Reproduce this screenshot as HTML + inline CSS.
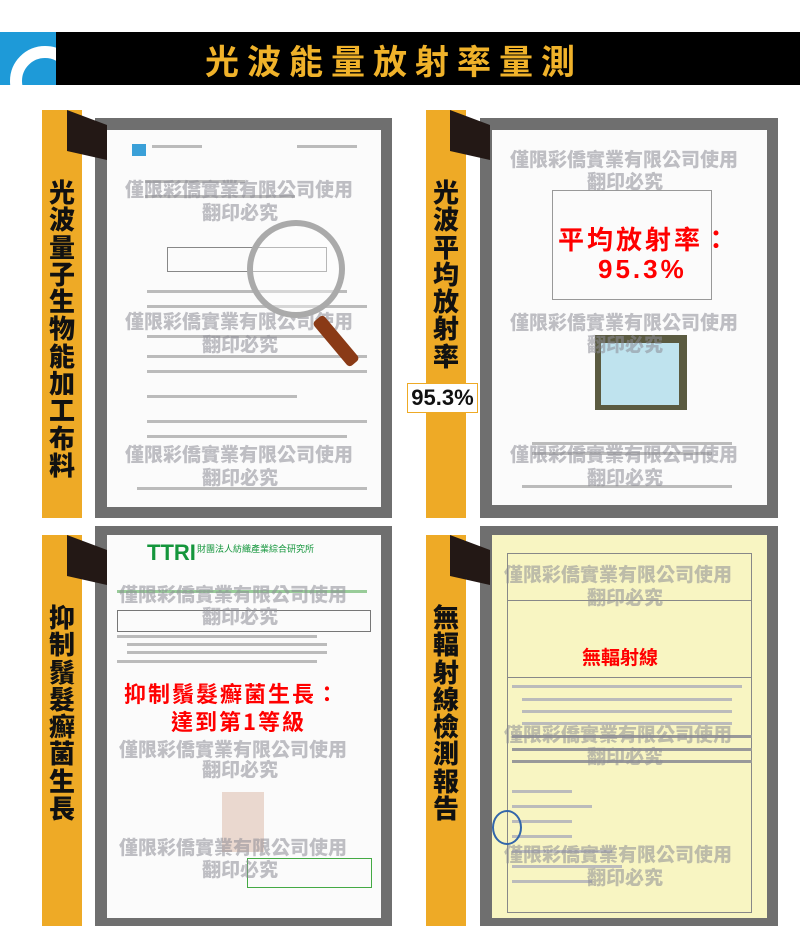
<!DOCTYPE html>
<html><head><meta charset="utf-8"><style>
*{margin:0;padding:0;box-sizing:border-box}
body{width:800px;height:945px;background:#fff;position:relative;overflow:hidden;font-family:"Liberation Sans","Noto Sans CJK TC",sans-serif}
.a{position:absolute}
.hdr{left:0;top:32px;width:800px;height:53px;background:#000}
.blue{left:0;top:32px;width:56px;height:53px;background:#1e9ad8;overflow:hidden}
.ttl{left:205px;top:37px;color:#f0b22a;font-size:34px;font-weight:bold;letter-spacing:8px;line-height:45px;font-family:"Noto Sans CJK TC",sans-serif}
.ys{background:#eeaa26}
.dk{background:#231815;clip-path:polygon(0 0,100% 30%,100% 100%,0 82%)}
.gray{background:#6f6f6f}
.doc{background:#fbfbfb;overflow:hidden}
.vt{color:#111;font-weight:900;font-size:26px;line-height:27.3px;width:40px;text-align:center;font-family:"Noto Sans CJK TC",sans-serif}
.wm{position:absolute;color:rgba(140,140,150,.55);font-weight:900;font-size:19px;white-space:nowrap;font-family:"Noto Sans CJK TC",sans-serif}
.wm2{position:absolute;color:rgba(140,140,150,.55);font-weight:900;font-size:19px;white-space:nowrap;font-family:"Noto Sans CJK TC",sans-serif}
.ln{position:absolute;height:3px;background:#bbb}
.red{position:absolute;color:#f00;font-weight:bold;white-space:nowrap;font-family:"Noto Sans CJK TC",sans-serif}
</style></head><body>
<div class="a hdr"></div>
<div class="a blue"><div style="position:absolute;left:10px;top:14px;width:70px;height:70px;border:12px solid #fff;border-radius:50%"></div></div>
<div class="a ttl">光波能量放射率量測</div>

<!-- panel 1 -->
<div class="a ys" style="left:42px;top:110px;width:40px;height:408px"></div>
<div class="a gray" style="left:95px;top:118px;width:297px;height:400px"></div>
<div class="a dk" style="left:67px;top:110px;width:40px;height:50px"></div>
<div class="a doc" style="left:107px;top:130px;width:274px;height:377px">
 <div class="a" style="left:25px;top:14px;width:14px;height:12px;background:#3aa0d8"></div>
 <div class="ln" style="left:45px;top:15px;width:50px"></div><div class="ln" style="left:190px;top:15px;width:60px"></div>
 <div class="ln" style="left:38px;top:50px;width:100px"></div><div class="ln" style="left:38px;top:65px;width:150px"></div>
 <div class="a" style="left:60px;top:117px;width:160px;height:25px;border:1px solid #888"></div>
 <div class="ln" style="left:40px;top:160px;width:200px"></div><div class="ln" style="left:40px;top:175px;width:220px"></div>
 <div class="ln" style="left:40px;top:205px;width:180px"></div><div class="ln" style="left:40px;top:225px;width:220px"></div>
 <div class="ln" style="left:40px;top:240px;width:220px"></div><div class="ln" style="left:40px;top:265px;width:150px"></div>
 <div class="ln" style="left:40px;top:290px;width:220px"></div><div class="ln" style="left:40px;top:305px;width:200px"></div>
 <div class="ln" style="left:30px;top:357px;width:230px"></div>
 <div class="wm" style="left:18px;top:45px">僅限彩僑實業有限公司使用</div><div class="wm2" style="left:95px;top:68px">翻印必究</div>
 <div class="wm" style="left:18px;top:177px">僅限彩僑實業有限公司使用</div><div class="wm2" style="left:95px;top:200px">翻印必究</div>
 <div class="wm" style="left:18px;top:310px">僅限彩僑實業有限公司使用</div><div class="wm2" style="left:95px;top:333px">翻印必究</div>
 <div class="a" style="left:140px;top:90px;width:98px;height:98px;border:6px solid #aaa;border-radius:50%;background:rgba(255,255,255,.4)"></div>
 <div class="a" style="left:222px;top:182px;width:14px;height:58px;background:#8a3a16;transform:rotate(-40deg);border-radius:4px"></div>
</div>
<div class="a vt" style="left:42px;top:178px">光<br>波<br>量<br>子<br>生<br>物<br>能<br>加<br>工<br>布<br>料</div>

<!-- panel 2 -->
<div class="a ys" style="left:426px;top:110px;width:40px;height:408px"></div>
<div class="a gray" style="left:480px;top:118px;width:298px;height:400px"></div>
<div class="a dk" style="left:450px;top:110px;width:40px;height:50px"></div>
<div class="a doc" style="left:492px;top:130px;width:275px;height:375px">
 <div class="a" style="left:60px;top:60px;width:160px;height:110px;border:1px solid #999"></div>
 <div class="a" style="left:103px;top:205px;width:92px;height:75px;background:#5a5a40"><div style="margin:8px 8px 0 6px;height:62px;background:#bfe3ee"></div></div>
 <div class="ln" style="left:40px;top:312px;width:200px"></div><div class="ln" style="left:40px;top:322px;width:180px"></div>
 <div class="ln" style="left:30px;top:355px;width:210px"></div>
 <div class="wm" style="left:18px;top:15px">僅限彩僑實業有限公司使用</div><div class="wm2" style="left:95px;top:37px">翻印必究</div>
 <div class="wm" style="left:18px;top:178px">僅限彩僑實業有限公司使用</div><div class="wm2" style="left:95px;top:200px">翻印必究</div>
 <div class="wm" style="left:18px;top:310px">僅限彩僑實業有限公司使用</div><div class="wm2" style="left:95px;top:333px">翻印必究</div>
 <div class="red" style="left:66px;top:90px;font-size:26px;letter-spacing:3px">平均放射率：</div>
 <div class="red" style="left:106px;top:124px;font-size:26px;letter-spacing:3px;font-family:'Liberation Sans',sans-serif">95.3%</div>
</div>
<div class="a vt" style="left:426px;top:178px">光<br>波<br>平<br>均<br>放<br>射<br>率</div>
<div class="a" style="left:407px;top:383px;width:71px;height:30px;background:#fff;border:1px solid #eeaa26;font-weight:900;font-size:22px;line-height:28px;text-align:center;color:#111">95.3%</div>

<!-- panel 3 -->
<div class="a ys" style="left:42px;top:535px;width:40px;height:391px"></div>
<div class="a gray" style="left:95px;top:526px;width:297px;height:400px"></div>
<div class="a dk" style="left:67px;top:535px;width:40px;height:50px"></div>
<div class="a doc" style="left:107px;top:535px;width:274px;height:383px">
 <div class="a" style="left:40px;top:5px;color:#14963c;font-weight:900;font-size:22px;font-family:'Liberation Sans',sans-serif">TTRI</div>
 <div class="a" style="left:90px;top:7px;color:#14963c;font-size:9px">財團法人紡織產業綜合研究所</div>
 <div class="ln" style="left:10px;top:55px;width:250px;background:#9c9"></div>
 <div class="a" style="left:10px;top:75px;width:254px;height:22px;border:1px solid #777"></div>
 <div class="ln" style="left:10px;top:100px;width:200px"></div><div class="ln" style="left:20px;top:108px;width:200px"></div>
 <div class="ln" style="left:20px;top:116px;width:200px"></div><div class="ln" style="left:10px;top:125px;width:200px"></div>
 <div class="a" style="left:115px;top:257px;width:42px;height:60px;background:#ead8cf"></div>
 <div class="a" style="left:140px;top:323px;width:125px;height:30px;border:1px solid #4a4"></div>
 <div class="wm" style="left:12px;top:45px">僅限彩僑實業有限公司使用</div><div class="wm2" style="left:95px;top:67px">翻印必究</div>
 <div class="wm" style="left:12px;top:200px">僅限彩僑實業有限公司使用</div><div class="wm2" style="left:95px;top:220px">翻印必究</div>
 <div class="wm" style="left:12px;top:298px">僅限彩僑實業有限公司使用</div><div class="wm2" style="left:95px;top:320px">翻印必究</div>
 <div class="red" style="left:17px;top:142px;font-size:22px;letter-spacing:2px">抑制鬚髮癬菌生長：</div>
 <div class="red" style="left:64px;top:170px;font-size:22px;letter-spacing:2px">達到第1等級</div>
</div>
<div class="a vt" style="left:42px;top:603px">抑<br>制<br>鬚<br>髮<br>癬<br>菌<br>生<br>長</div>

<!-- panel 4 -->
<div class="a ys" style="left:426px;top:535px;width:40px;height:391px"></div>
<div class="a gray" style="left:480px;top:526px;width:298px;height:400px"></div>
<div class="a dk" style="left:450px;top:535px;width:40px;height:50px"></div>
<div class="a doc" style="left:492px;top:535px;width:275px;height:383px;background:#f8f5c2">
 <div class="a" style="left:15px;top:18px;width:245px;height:360px;border:1px solid #888"></div>
 <div class="a" style="left:15px;top:65px;width:245px;height:78px;border-top:1px solid #888;border-bottom:1px solid #888"></div>
 <div class="ln" style="left:20px;top:150px;width:230px"></div><div class="ln" style="left:30px;top:163px;width:210px"></div>
 <div class="ln" style="left:30px;top:175px;width:210px"></div><div class="ln" style="left:30px;top:187px;width:210px"></div>
 <div class="ln" style="left:20px;top:200px;width:240px;background:#999"></div><div class="ln" style="left:20px;top:213px;width:240px;background:#999"></div>
 <div class="ln" style="left:20px;top:225px;width:240px;background:#999"></div>
 <div class="ln" style="left:20px;top:255px;width:60px"></div><div class="ln" style="left:20px;top:270px;width:80px"></div>
 <div class="ln" style="left:20px;top:285px;width:60px"></div><div class="ln" style="left:20px;top:300px;width:60px"></div>
 <div class="ln" style="left:20px;top:315px;width:100px"></div><div class="ln" style="left:20px;top:330px;width:110px"></div>
 <div class="ln" style="left:20px;top:345px;width:80px"></div>
 <div class="a" style="left:0;top:275px;width:30px;height:35px;border:2px solid #36a;border-radius:50%"></div>
 <div class="wm" style="left:12px;top:25px">僅限彩僑實業有限公司使用</div><div class="wm2" style="left:95px;top:48px">翻印必究</div>
 <div class="wm" style="left:12px;top:185px">僅限彩僑實業有限公司使用</div><div class="wm2" style="left:95px;top:207px">翻印必究</div>
 <div class="wm" style="left:12px;top:305px">僅限彩僑實業有限公司使用</div><div class="wm2" style="left:95px;top:328px">翻印必究</div>
 <div class="red" style="left:90px;top:108px;font-size:19px">無輻射線</div>
</div>
<div class="a vt" style="left:426px;top:603px">無<br>輻<br>射<br>線<br>檢<br>測<br>報<br>告</div>
</body></html>
